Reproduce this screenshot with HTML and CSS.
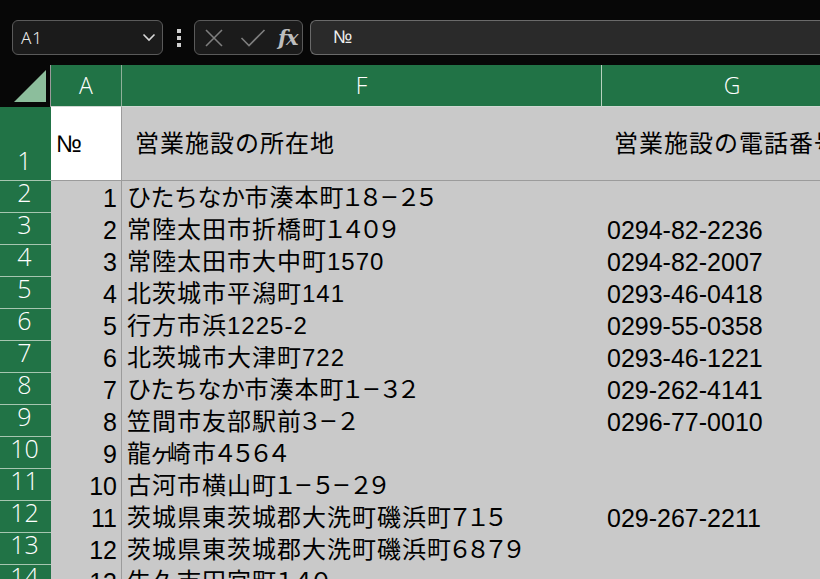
FILE: index.html
```html
<!DOCTYPE html>
<html lang="ja">
<head>
<meta charset="utf-8">
<title>Sheet</title>
<link rel="stylesheet" href="styles.css">
</head>
<body>
<div class="app">
  <div class="topbar"></div>
  <div class="formula-row">
    <div class="namebox">
      <span class="namebox-text">A1</span>
      <svg class="chev" width="14" height="9" viewBox="0 0 14 9"><path d="M1.5 1.5 L7 7 L12.5 1.5" fill="none" stroke="#d8d8d8" stroke-width="1.6"/></svg>
    </div>
    <div class="grip"><span></span><span></span><span></span></div>
    <div class="fxbox">
      <svg class="fx-x" width="20" height="20" viewBox="0 0 20 20"><path d="M2 2 L18 18 M18 2 L2 18" stroke="#7e7e7e" stroke-width="1.6" fill="none"/></svg>
      <svg class="fx-check" width="26" height="20" viewBox="0 0 26 20"><path d="M1.5 10 L9 17.5 L24.5 2" stroke="#7e7e7e" stroke-width="1.6" fill="none"/></svg>
      <span class="fx-label">fx</span>
    </div>
    <div class="formula-input"><span class="formula-text">№</span></div>
  </div>
  <div class="spacer"></div>
  <div class="sheet">
    <div class="corner"><svg width="36" height="36" viewBox="0 0 36 36"><polygon points="2,34 34,2 34,34" fill="#8cbe9c"/></svg></div>
    <div class="ch ch-a">A</div>
    <div class="ch ch-f">F</div>
    <div class="ch ch-g">G</div>

    <div class="rh rh-1">1</div>
    <div class="cell a1">№</div>
    <div class="cell h1 f1">営業施設の所在地</div>
    <div class="cell h1 g1">営業施設の電話番号</div>

    <div class="rh">2</div><div class="cell num">1</div><div class="cell txt"><span class="kana">ひたちなか</span>市湊本町<span class="fw">１８<span class="dash">－</span>２５</span></div><div class="cell tel"></div>
    <div class="rh">3</div><div class="cell num">2</div><div class="cell txt">常陸太田市折橋町<span class="fw">１４０９</span></div><div class="cell tel">0294-82-2236</div>
    <div class="rh">4</div><div class="cell num">3</div><div class="cell txt">常陸太田市大中町1570</div><div class="cell tel">0294-82-2007</div>
    <div class="rh">5</div><div class="cell num">4</div><div class="cell txt">北茨城市平潟町141</div><div class="cell tel">0293-46-0418</div>
    <div class="rh">6</div><div class="cell num">5</div><div class="cell txt">行方市浜1225-2</div><div class="cell tel">0299-55-0358</div>
    <div class="rh">7</div><div class="cell num">6</div><div class="cell txt">北茨城市大津町722</div><div class="cell tel">0293-46-1221</div>
    <div class="rh">8</div><div class="cell num">7</div><div class="cell txt"><span class="kana">ひたちなか</span>市湊本町<span class="fw">１<span class="dash">－</span>３２</span></div><div class="cell tel">029-262-4141</div>
    <div class="rh">9</div><div class="cell num">8</div><div class="cell txt">笠間市友部駅前<span class="fw">３<span class="dash">－</span>２</span></div><div class="cell tel">0296-77-0010</div>
    <div class="rh">10</div><div class="cell num">9</div><div class="cell txt">龍<span class="small-ke">ヶ</span>崎市<span class="fw">４５６４</span></div><div class="cell tel"></div>
    <div class="rh">11</div><div class="cell num">10</div><div class="cell txt">古河市横山町<span class="fw">１<span class="dash">－</span>５<span class="dash">－</span>２９</span></div><div class="cell tel"></div>
    <div class="rh">12</div><div class="cell num">11</div><div class="cell txt">茨城県東茨城郡大洗町磯浜町<span class="fw">７１５</span></div><div class="cell tel">029-267-2211</div>
    <div class="rh">13</div><div class="cell num">12</div><div class="cell txt">茨城県東茨城郡大洗町磯浜町<span class="fw">６８７９</span></div><div class="cell tel"></div>
    <div class="rh">14</div><div class="cell num">13</div><div class="cell txt">牛久市田宮町<span class="fw">１４０</span></div><div class="cell tel"></div>
  </div>
</div>
</body>
</html>
```

FILE: styles.css
```css
html, body {
  margin: 0;
  padding: 0;
  background: #070707;
  overflow: hidden;
}
.app {
  width: 820px;
  height: 579px;
  overflow: hidden;
  background: #070707;
}
.topbar {
  height: 20px;
}
.formula-row {
  height: 35px;
  display: flex;
  padding-left: 12px;
  box-sizing: border-box;
}
.namebox {
  width: 151px;
  box-sizing: border-box;
  border: 1px solid #5a5a5a;
  border-radius: 6px;
  background: #1b1b1b;
  display: flex;
  align-items: center;
  justify-content: space-between;
  padding: 0 6px 0 8px;
}
.namebox-text {
  font-family: "Noto Sans", sans-serif;
  font-weight: 300;
  font-size: 17px;
  color: #ececec;
  letter-spacing: 1px;
}
.grip {
  width: 31px;
  display: flex;
  flex-direction: column;
  align-items: center;
  justify-content: center;
  gap: 3px;
}
.grip span {
  width: 4px;
  height: 4px;
  background: #d0d0d0;
}
.fxbox {
  width: 109px;
  box-sizing: border-box;
  border: 1px solid #5a5a5a;
  border-radius: 6px;
  background: #1b1b1b;
  display: flex;
  align-items: center;
  padding-left: 9px;
}
.fx-x {
  margin-right: 16px;
}
.fx-check {
  margin-right: 12px;
}
.fx-label {
  font-family: "DejaVu Serif", "Liberation Serif", serif;
  font-style: italic;
  font-weight: bold;
  font-size: 21px;
  color: #bdbdbd;
  letter-spacing: -1px;
}
.formula-input {
  flex: 1;
  margin-left: 7px;
  box-sizing: border-box;
  border: 1px solid #6a6a6a;
  border-right: none;
  border-radius: 6px 0 0 6px;
  background: #2a2a2a;
  display: flex;
  align-items: center;
  padding-left: 22px;
}
.formula-text {
  font-family: "Liberation Sans Narrow", "Liberation Sans", sans-serif;
  font-size: 18px;
  color: #f0f0f0;
}
.spacer {
  height: 10px;
}
.sheet {
  display: grid;
  grid-template-columns: 51px 71px 480px 260px;
  grid-template-rows: 42px 74px repeat(13, 32px);
}
.corner {
  background: #070707;
  box-sizing: border-box;
  border-right: 1px solid #9a9a9a;
  display: flex;
  align-items: flex-end;
  justify-content: flex-end;
  padding: 0 2px 3px 0;
}
.ch {
  background: #217346;
  color: #ffffff;
  font-family: "Open Sans", sans-serif;
  font-weight: 300;
  font-size: 23px;
  display: flex;
  align-items: center;
  justify-content: center;
  box-sizing: border-box;
  border-bottom: 1px solid #cfd8d2;
  padding-bottom: 2px;
}
.ch-a {
  border-right: 1px solid #8fb09a;
}
.ch-f {
  border-right: 1px solid #b7d2bf;
}
.rh {
  background: #217346;
  color: #ffffff;
  font-family: "Open Sans", sans-serif;
  font-weight: 300;
  font-size: 25px;
  line-height: 22px;
  display: flex;
  align-items: flex-end;
  justify-content: center;
  box-sizing: border-box;
  border-bottom: 1px solid #a6c6b0;
  padding-bottom: 9px;
  padding-right: 2px;
}
.cell {
  background: #c9c9c9;
  color: #000000;
  font-family: "Liberation Sans", "Noto Sans CJK JP", sans-serif;
  font-size: 24px;
  line-height: 28px;
  display: flex;
  align-items: flex-end;
  box-sizing: border-box;
  white-space: nowrap;
  padding-bottom: 1px;
}
.a1 {
  background: #ffffff;
  border-right: 1px solid #9b9b9b;
  border-bottom: 1px solid #9b9b9b;
  align-items: center;
  padding: 0 0 0 5px;
}
.h1 {
  border-bottom: 1px solid #9b9b9b;
  align-items: center;
  padding: 0 0 0 13px;
  letter-spacing: 1px;
}
.g1 {
  padding-left: 12px;
}
.num {
  font-size: 25px;
  justify-content: flex-end;
  padding-right: 4px;
  border-right: 1px solid #9b9b9b;
}
.txt {
  padding-left: 5px;
  letter-spacing: 1px;
}
.kana {
  letter-spacing: -0.5px;
}
.small-ke {
  letter-spacing: -6px;
  margin-left: -3px;
}
.fw {
  letter-spacing: -6px;
  margin-left: -4px;
}
.dash {
  display: inline-block;
  transform: scaleX(0.78);
  margin-left: 1px;
  margin-right: 1px;
}
.tel {
  font-size: 25px;
  padding-left: 5px;
}
```
